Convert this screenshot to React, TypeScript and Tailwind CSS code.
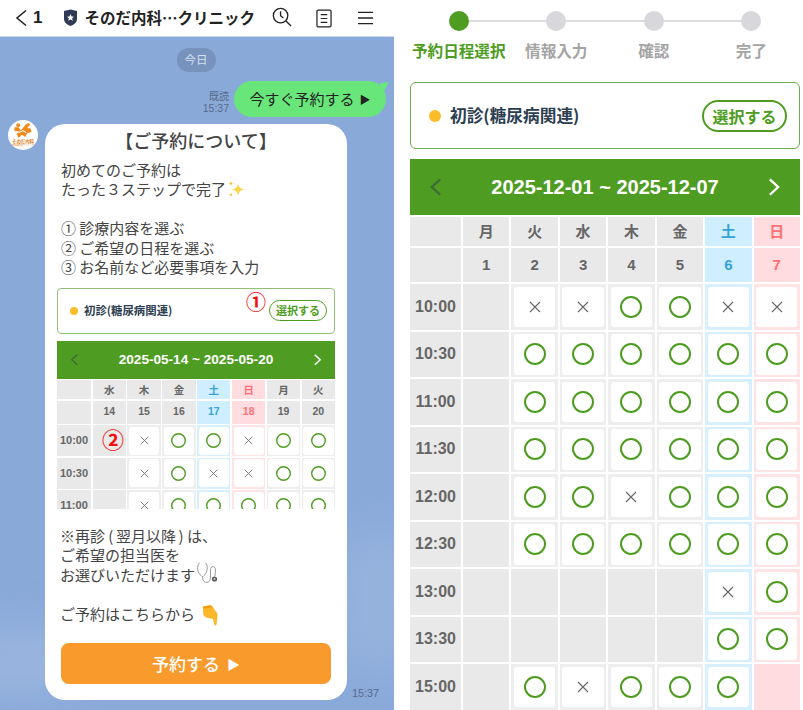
import React from 'react';

type C = 'o' | 'x' | '-';
const parse = (s: string) => s.split('') as C[];

const Circle = ({ size, stroke }: { size: number; stroke: number }) => (
  <svg width={size} height={size} viewBox={`0 0 ${size} ${size}`}>
    <circle cx={size / 2} cy={size / 2} r={size / 2 - stroke / 2} fill="none" stroke="#4e9d22" strokeWidth={stroke} />
  </svg>
);
const Cross = ({ size }: { size: number }) => (
  <svg width={size} height={size} viewBox="0 0 12 12">
    <path d="M1 1L11 11M11 1L1 11" stroke="#666" strokeWidth="1.1" fill="none" />
  </svg>
);
const Chevron = ({ dir, size, color }: { dir: 'l' | 'r'; size: number; color: string }) => (
  <svg width={size} height={size * 1.3} viewBox="0 0 10 13" fill="none">
    <path d={dir === 'l' ? 'M8 1L2 6.5L8 12' : 'M2 1L8 6.5L2 12'} stroke={color} strokeWidth="1.6" />
  </svg>
);

function Calendar({
  big,
  range,
  days,
  dates,
  rows,
}: {
  big: boolean;
  range: string;
  days: string[];
  dates: string[];
  rows: [string, string][];
}) {
  const tint = (d: string) =>
    d === '土' ? 'bg-[#cfeeff] text-[#36a3d9]' : d === '日' ? 'bg-[#ffdcdf] text-[#ff7076]' : 'bg-[#e9e9e9] text-[#666666]';
  const grid = big
    ? 'grid grid-cols-[51px_repeat(7,1fr)] gap-[2px] mt-[2px]'
    : 'grid grid-cols-[34px_repeat(7,1fr)] gap-[1.6px] mt-[1.6px]';
  return (
    <div className="font-['Liberation_Sans','Noto_Sans_CJK_JP',sans-serif]">
      <div
        className={
          big
            ? 'flex h-[56px] items-center justify-between bg-[#4e9d22] pl-[19px] pr-[19px] text-white'
            : 'flex h-[38px] items-center justify-between bg-[#4e9d22] pl-[13px] pr-[13px] text-white'
        }
      >
        <Chevron dir="l" size={big ? 14 : 9} color="#3f6b36" />
        <span className={big ? 'text-[20px] font-bold' : 'text-[13.6px] font-bold'}>{range}</span>
        <Chevron dir="r" size={big ? 14 : 9} color="#ffffff" />
      </div>
      <div className={grid}>
        <div className={big ? 'h-[29px] bg-[#e9e9e9]' : 'h-[19px] bg-[#e9e9e9]'} />
        {days.map((d) => (
          <div
            key={d}
            className={`${tint(d)} ${
              big ? 'h-[29px] text-[15px]' : 'h-[19px] text-[10.5px]'
            } flex items-center justify-center font-bold font-['Noto_Sans_CJK_JP',sans-serif]`}
          >
            {d}
          </div>
        ))}
        <div className={big ? 'h-[34px] bg-[#e9e9e9]' : 'h-[23px] bg-[#e9e9e9]'} />
        {dates.map((d, i) => (
          <div
            key={d}
            className={`${tint(days[i])} ${
              big ? 'h-[34px] text-[15px]' : 'h-[23px] text-[10.5px]'
            } flex items-center justify-center font-bold`}
          >
            {d}
          </div>
        ))}
        {rows.map(([t, r]) => (
          <React.Fragment key={t}>
            <div
              className={`flex items-center justify-center bg-[#e9e9e9] font-bold text-[#666666] ${
                big ? 'h-[45.5px] text-[16px]' : 'h-[31px] text-[11px]'
              }`}
            >
              {t}
            </div>
            {parse(r).map((c, i) => {
              const d = days[i];
              const bg = c === '-'
                ? d === '日' ? 'bg-[#ffdcdf]' : d === '土' ? 'bg-[#cfeeff]' : 'bg-[#e9e9e9]'
                : d === '日' ? 'bg-[#ffe3e5]' : d === '土' ? 'bg-[#d6f0ff]' : 'bg-[#eeeeee]';
              return (
                <div key={i} className={`${bg} ${big ? 'h-[45.5px] p-[2.5px]' : 'h-[31px] p-[1.5px]'}`}>
                  {c !== '-' && (
                    <div className="flex h-full w-full items-center justify-center rounded-[3px] bg-white">
                      {c === 'o' ? (
                        <Circle size={big ? 22 : 15} stroke={big ? 2 : 1.4} />
                      ) : (
                        <Cross size={big ? 12 : 9} />
                      )}
                    </div>
                  )}
                </div>
              );
            })}
          </React.Fragment>
        ))}
      </div>
    </div>
  );
}

const Sparkle = () => (
  <svg width="18" height="18" viewBox="0 0 18 18" className="ml-[1px] inline-block align-[-3px]">
    <path d="M11 3C11.6 7 12.6 8.4 17 9.5C12.6 10.6 11.6 12 11 16C10.4 12 9.4 10.6 5 9.5C9.4 8.4 10.4 7 11 3Z" fill="#fcd34d" />
    <path d="M4 1C4.2 2.8 4.8 3.2 6.4 3.6C4.8 4 4.2 4.4 4 6C3.8 4.4 3.2 4 1.6 3.6C3.2 3.2 3.8 2.8 4 1Z" fill="#fbbf24" />
    <path d="M4 12.5C4.2 14 4.6 14.4 6 14.8C4.6 15.2 4.2 15.6 4 17C3.8 15.6 3.4 15.2 2 14.8C3.4 14.4 3.8 14 4 12.5Z" fill="#fbbf24" />
  </svg>
);
const Stethoscope = () => (
  <svg width="22" height="22" viewBox="0 0 22 22" fill="none" className="relative top-[-3px] -my-[8px] ml-[1px] inline-block align-middle">
    <path d="M3.5 0.8C0.5 4 1 11 5.5 14" stroke="#8f8f8f" strokeWidth="0.9" />
    <path d="M9.5 0.8C12.5 4 11.5 11 7.5 14" stroke="#8f8f8f" strokeWidth="0.9" />
    <path d="M6.5 14C6 22 14 22.5 14.5 16L14.5 8C14.5 3.5 19.5 3.5 19.5 8L19 14" stroke="#8f8f8f" strokeWidth="0.9" />
    <circle cx="18.5" cy="17" r="2.6" fill="#5a5a5a" />
    <circle cx="18.5" cy="17" r="1.1" fill="#cccccc" />
  </svg>
);
const PointDown = () => (
  <svg width="16" height="21" viewBox="0 0 16 21" className="-my-[6px] ml-[7px] inline-block align-middle">
    <path d="M1 1.5L8.5 0.3C9.5 0.2 10.2 0.8 10.8 2L15 8C15.8 9.5 15.6 11 15.3 12.5L14.6 19.3C14.3 21 12.6 21 12.2 19.3L11 14L6.5 13C3 12.4 1.6 11 1.2 8.5Z" fill="#fbb728" />
    <path d="M1 1.5L8.5 0.3L9.5 2.4L1.3 3.8Z" fill="#f59e0b" />
  </svg>
);

const Avatar = () => (
  <div className="flex h-[30px] w-[30px] shrink-0 flex-col items-center justify-center overflow-hidden rounded-full bg-white">
    <svg width="20" height="15" viewBox="0 0 18 14">
      <path d="M12 1L14.5 2.5L13 5L16 5L17 8.5L13 9.5L11 13L8 11L5 14L3 10L6 8L1 7.5L1 4L5 4L7 7L9 4.5Z" fill="#f08a1d" />
      <circle cx="4.5" cy="2" r="1.8" fill="#f08a1d" />
      <circle cx="14" cy="1.4" r="1.4" fill="#f08a1d" />
      <path d="M5 9L9 7L12 9" stroke="#fff" strokeWidth="1" fill="none" />
    </svg>
    <span className="mt-[1px] text-[4.4px] leading-[5px] font-bold text-[#e77b13]">そのだ内科</span>
    <span className="text-[2.2px] leading-[3px] text-[#e77b13]">糖尿病内科クリニック</span>
  </div>
);

export default function App() {
  return (
    <div className="flex h-[710px] w-[803px] overflow-hidden bg-white font-['Noto_Sans_CJK_JP',sans-serif]">
      {/* Left: chat */}
      <div className="flex h-full w-[394px] shrink-0 flex-col">
        <header className="flex h-[37px] shrink-0 items-center border-b border-[#cdd8ea] bg-white text-[#222222]">
          <svg width="14" height="18" viewBox="0 0 14 18" fill="none" className="ml-[14px]">
            <path d="M12 1.5L3 9L12 16.5" stroke="#222" strokeWidth="1.6" />
          </svg>
          <span className="ml-[5px] font-['Liberation_Sans',sans-serif] text-[17px] font-bold">1</span>
          <svg width="15" height="18" viewBox="0 0 15 18" className="ml-[21px]">
            <path d="M1 2L7.5 0.5L14 2V10C14 13.5 10.5 16 7.5 17C4.5 16 1 13.5 1 10Z" fill="#2f3b55" />
            <path d="M7.5 5L8.5 7.6L11 7.7L9.1 9.3L9.8 11.8L7.5 10.4L5.2 11.8L5.9 9.3L4 7.7L6.5 7.6Z" fill="#fff" />
          </svg>
          <span className="ml-[6px] w-[176px] whitespace-nowrap text-[15.5px] font-bold">そのだ内科…クリニック</span>
          <svg width="20" height="20" viewBox="0 0 21 21" fill="none" className="mb-[2px] ml-[12px]" stroke="#222" strokeWidth="1.4">
            <circle cx="9" cy="9" r="7.6" />
            <path d="M14.6 14.6L20 20M9 4.5V9.2L12 11.5" />
          </svg>
          <svg width="16" height="19" viewBox="0 0 17 20" fill="none" className="ml-[24px]" stroke="#222" strokeWidth="1.3">
            <rect x="1" y="1" width="15" height="18" rx="1.5" />
            <path d="M5 6H12M5 10H12M5 14H12" />
          </svg>
          <svg width="15" height="14" viewBox="0 0 16 14" fill="none" className="ml-[26px]" stroke="#222" strokeWidth="1.4">
            <path d="M0 1H16M0 7H16M0 13H16" />
          </svg>
        </header>

        <main className="relative flex min-h-0 flex-1 flex-col overflow-hidden bg-[#89a9d9] pr-[8px]">
          <div className="absolute left-[-40px] top-[590px] h-[70px] w-[130px] rounded-full bg-[#a9c0e4] opacity-50 blur-[20px]" />
          <div className="absolute right-[-30px] top-[490px] h-[150px] w-[90px] rounded-full bg-[#a9c0e4] opacity-40 blur-[22px]" />
          <div className="relative mt-[11px] flex justify-center pl-[6px]">
            <span className="flex h-[24px] w-[39px] items-center justify-center rounded-full bg-[#7792bc] text-[11.5px] text-[#d7e2f2]">
              今日
            </span>
          </div>
          <div className="relative mt-[9px] flex items-end justify-end">
            <div className="mb-[2px] mr-[5px] text-right text-[10px] leading-[13px] text-[#56698a]">
              <div>既読</div>
              <div className="font-['Liberation_Sans',sans-serif] text-[10.5px]">15:37</div>
            </div>
            <div className="relative flex h-[36px] w-[152px] items-center justify-center rounded-[18px] bg-[#68e67a] text-[15px] text-[#222222]">
              今すぐ予約する <span className="ml-[5px] text-[11px]">▶</span>
              <svg width="10" height="9" viewBox="0 0 10 9" className="absolute right-[-3px] top-[1px]">
                <path d="M0 1.5L10 0L5 9Z" fill="#68e67a" />
              </svg>
            </div>
          </div>

          <div className="relative mt-[3px] flex items-start pl-[8px]">
            <Avatar />
            <div className="ml-[7px] mt-[4px] flex h-[576px] w-[302px] flex-col rounded-[20px] bg-white px-[12px] text-[15px] leading-[19.5px] text-[#444444]">
              <h1 className="mt-[4px] text-center text-[18px] leading-[24px] font-medium">【ご予約について】</h1>
              <p className="mt-[7.5px] pl-[4px]">
                初めてのご予約は
                <br />
                たった３ステップで完了
                <Sparkle />
                <br />
                <br />
                ① 診療内容を選ぶ
                <br />
                ② ご希望の日程を選ぶ
                <br />③ お名前など必要事項を入力
              </p>

              <div className="relative mt-[11px] shrink-0">
                <div className="flex h-[46px] items-center rounded-[4px] border border-[#8fc373] bg-white pl-[12px] pr-[7px]">
                  <span className="h-[8px] w-[8px] rounded-full bg-[#fbbc2a]" />
                  <span className="ml-[6px] text-[11.4px] font-bold text-[#2c3e50]">初診(糖尿病関連)</span>
                  <span className="ml-auto flex h-[21px] w-[58px] items-center justify-center rounded-full border-[1.5px] border-[#4e9d22] text-[11px] font-bold text-[#4e9d22]">
                    選択する
                  </span>
                </div>
                <div className="mt-[7px] h-[168px] overflow-hidden">
                  <Calendar
                    big={false}
                    range="2025-05-14 ~ 2025-05-20"
                    days={['水', '木', '金', '土', '日', '月', '火']}
                    dates={['14', '15', '16', '17', '18', '19', '20']}
                    rows={[
                      ['10:00', '-xooxoo'],
                      ['10:30', '-xoxxoo'],
                      ['11:00', '-xooooo'],
                    ]}
                  />
                </div>
                <span className="absolute left-[189px] top-[1px] text-[20px] leading-[26px] font-bold text-[#f01010]">①</span>
                <span className="absolute left-[45px] top-[137px] text-[22px] leading-[26px] font-bold text-[#f01010]">②</span>
              </div>

              <p className="mt-[17px] pl-[3px]">
                ※再診 (<span className="mx-[2.5px]">翌月以降</span>) は、
                <br />
                ご希望の担当医を
                <br />
                お選びいただけます
                <Stethoscope />
                <br />
                <br />
                ご予約はこちらから
                <PointDown />
              </p>

              <button className="mx-[4px] mt-[20.25px] flex h-[41px] shrink-0 items-center justify-center rounded-[8px] bg-[#f99a2c] text-[17px] font-medium text-white">
                予約する <span className="ml-[7px] text-[13px]">▶</span>
              </button>
            </div>
            <span className="ml-[5px] mt-[565px] font-['Liberation_Sans',sans-serif] text-[10.8px] text-[#56698a]">15:37</span>
          </div>
        </main>
      </div>

      {/* Right: booking */}
      <div className="flex min-w-0 flex-1 flex-col overflow-hidden pl-[16px] pr-[3px]">
        <div className="relative mt-[11px] flex">
          <div className="absolute left-[49px] right-[49px] top-[9px] h-[2px] bg-[#dcdce0]" />
          {[
            ['予約日程選択', true],
            ['情報入力', false],
            ['確認', false],
            ['完了', false],
          ].map(([label, active]) => (
            <div key={label as string} className="relative flex flex-1 flex-col items-center">
              <span className={`h-[20px] w-[20px] rounded-full ${active ? 'bg-[#4e9d22]' : 'bg-[#d7d7dc]'}`} />
              <span className={`mt-[7px] whitespace-nowrap text-[15.6px] leading-[24px] font-bold ${active ? 'text-[#4e9d22]' : 'text-[#a4a4a4]'}`}>
                {label as string}
              </span>
            </div>
          ))}
        </div>

        <div className="mt-[20px] flex h-[67px] shrink-0 items-center rounded-[6px] border border-[#6fae4d] pl-[18px] pr-[12px]">
          <span className="h-[12px] w-[12px] rounded-full bg-[#fbbc2a]" />
          <span className="ml-[9px] text-[16.7px] font-bold text-[#2c3e50]">初診(糖尿病関連)</span>
          <span className="ml-auto flex h-[32px] w-[85px] items-center justify-center rounded-full border-2 border-[#4e9d22] text-[16px] font-bold text-[#4e9d22]">
            選択する
          </span>
        </div>

        <div className="mt-[10px]">
          <Calendar
            big
            range="2025-12-01 ~ 2025-12-07"
            days={['月', '火', '水', '木', '金', '土', '日']}
            dates={['1', '2', '3', '4', '5', '6', '7']}
            rows={[
              ['10:00', '-xxooxx'],
              ['10:30', '-oooooo'],
              ['11:00', '-oooooo'],
              ['11:30', '-oooooo'],
              ['12:00', '-ooxooo'],
              ['12:30', '-oooooo'],
              ['13:00', '-----xo'],
              ['13:30', '-----oo'],
              ['15:00', '-oxooo-'],
            ]}
          />
        </div>
      </div>
    </div>
  );
}
